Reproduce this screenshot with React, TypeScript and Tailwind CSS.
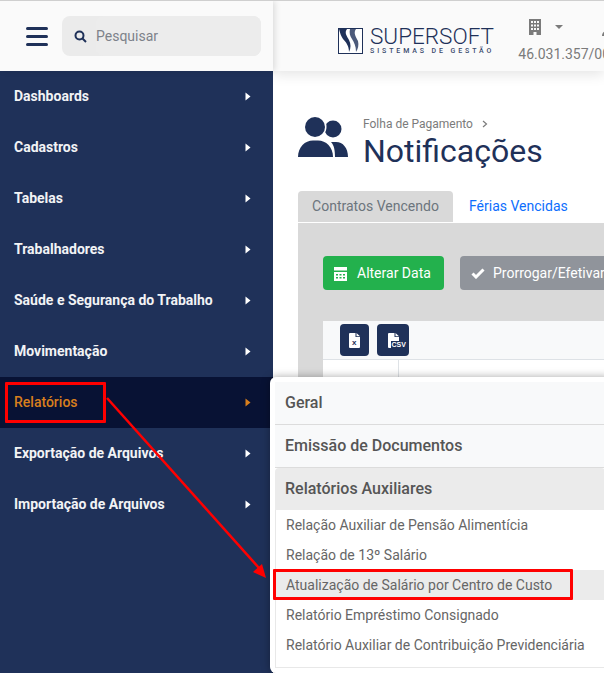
const menu = [
  "Dashboards",
  "Cadastros",
  "Tabelas",
  "Trabalhadores",
  "Saúde e Segurança do Trabalho",
  "Movimentação",
  "Relatórios",
  "Exportação de Arquivos",
  "Importação de Arquivos",
]

const groups = ["Geral", "Emissão de Documentos"]

const reports = [
  "Relação Auxiliar de Pensão Alimentícia",
  "Relação de 13º Salário",
  "Atualização de Salário por Centro de Custo",
  "Relatório Empréstimo Consignado",
  "Relatório Auxiliar de Contribuição Previdenciária",
]

function Caret({ color }: { color: string }) {
  return (
    <svg width="6" height="9" viewBox="0 0 6 9" className={color}>
      <path d="M0.5 0.5 L5.5 4.5 L0.5 8.5 Z" fill="currentColor" />
    </svg>
  )
}

function Logo() {
  return (
    <svg width="25" height="26" viewBox="0 0 25 26">
      <rect x="0.5" y="0.5" width="24" height="25" fill="#fff" stroke="#1f3159" />
      <path d="M1 1 H9 C6 5 9 8 11 12 C13 16 13 20 11 24 C11 18 8 14 5 11 C3 8 2 5 1 1 Z" fill="#1f3159" />
      <path d="M12 1 H18 C15 5 18 9 20 13 C21 17 20 21 18 24 C18 18 16 14 14 11 C12 8 11 5 12 1 Z" fill="#1f3159" opacity="0.8" />
    </svg>
  )
}

function UsersIcon() {
  return (
    <svg width="50" height="40" viewBox="0 0 50 40" className="shrink-0 text-[#1f3159]">
      <circle cx="35" cy="12" r="8.500" fill="currentColor" />
      <path d="M33 25 H38 C45 25 50 31 50 40 H37 C37 33 36 28 33 25 Z" fill="currentColor" />
      <circle cx="17" cy="10" r="10" fill="currentColor" stroke="#fff" strokeWidth="3" paintOrder="stroke" />
      <path d="M0 40 C0 30 7 23.500 15 23.500 H20 C28 23.500 35 30 35 40 Z" fill="currentColor" />
    </svg>
  )
}

function CalendarIcon() {
  return (
    <svg width="13" height="14" viewBox="0 0 13 14" fill="#fff">
      <path d="M0 0 H13 V3.500 H0 Z" />
      <path fillRule="evenodd" d="M0 5 H13 V14 H0 Z M2 7 V8.500 H4 V7 Z M5.500 7 V8.500 H7.500 V7 Z M9 7 V8.500 H11 V7 Z M2 10 V11.500 H4 V10 Z M5.500 10 V11.500 H7.500 V10 Z M9 10 V11.500 H11 V10 Z" />
    </svg>
  )
}

function FileBadge({ label, wide }: { label: string; wide?: boolean }) {
  return (
    <div className={`flex h-[32px] items-center justify-center rounded bg-[#1f3159] ${wide ? "w-[32px]" : "w-[29px]"}`}>
      <div className="relative h-[15px] w-[11px]">
        <svg width="11" height="15" viewBox="0 0 11 15" className="absolute inset-0">
          <path d="M0 1 Q0 0 1 0 H6.500 V4 H11 V14 Q11 15 10 15 H1 Q0 15 0 14 Z M7.500 0 L11 3.300 H7.500 Z" fill="#fff" />
        </svg>
        <span className={`absolute font-['Liberation_Sans',sans-serif] font-bold leading-none ${wide ? "top-[8px] left-[3px] bg-[#1f3159] px-px text-[7px] text-white" : "top-[6px] left-[3px] text-[8px] text-[#1f3159]"}`}>
          {label}
        </span>
      </div>
    </div>
  )
}

function Sidebar() {
  return (
    <aside className="relative z-10 flex w-[273px] shrink-0 flex-col bg-[#1f3159]">
      <div className="flex h-[70px] items-center bg-[#fafafa] pr-[12px] pl-[26px] shadow-[2px_0_6px_rgba(0,0,0,0.12)]">
        <div className="flex w-[22px] flex-col gap-[5px]">
          <div className="h-[3px] rounded-full bg-[#1f3159]" />
          <div className="h-[3px] rounded-full bg-[#1f3159]" />
          <div className="h-[3px] rounded-full bg-[#1f3159]" />
        </div>
        <div className="ml-[14px] flex h-[40px] flex-1 items-center rounded-lg bg-[#ebebeb] pl-[12px]">
          <svg width="13" height="13" viewBox="0 0 13 13" fill="none" stroke="#1f3159" strokeWidth="2">
            <circle cx="5.500" cy="5.500" r="4" />
            <path d="M8.500 8.500 L12 12" />
          </svg>
          <div className="ml-[9px] flex h-full flex-1 items-center rounded-lg bg-[#ececec] text-[14px] text-[#7d828a]">Pesquisar</div>
        </div>
      </div>
      {menu.map((item) => {
        const active = item === "Relatórios"
        return (
          <div
            key={item}
            className={`flex h-[51px] items-center justify-between pr-[22px] pl-[14px] text-[14px] ${active ? "bg-[#081234] font-medium text-[#d97f1d]" : "font-bold text-[#f2f3f5]"}`}
          >
            <span>{item}</span>
            <Caret color={active ? "text-[#d97f1d]" : "text-white"} />
          </div>
        )
      })}
    </aside>
  )
}

function TopBar() {
  return (
    <header className="flex h-[70px] shrink-0 items-start overflow-x-clip bg-[#fafafa] pl-[65px] shadow-[0_4px_12px_rgba(0,0,0,0.1)]">
      <div className="mt-[25px] flex items-center gap-[7px]">
        <Logo />
        <div className="flex flex-col">
          <span className="text-[22.500px] leading-[20px] font-light text-[#1f3159]">SUPERSOFT</span>
          <span className="mt-[1px] text-[7px] leading-[8px] font-medium tracking-[2.900px] whitespace-nowrap text-[#3b4b6e]">SISTEMAS DE GESTÃO</span>
        </div>
      </div>
      <div className="ml-[24px] flex w-[84px] shrink-0 flex-col whitespace-nowrap">
        <div className="mt-[18px] flex items-start pl-[11px]">
          <svg width="12" height="16" viewBox="0 0 12 16" fill="#7b7b7b">
            <path fillRule="evenodd" d="M0 0 H12 V16 H7.500 V13 H4.500 V16 H0 Z M2 2 V4 H4 V2 Z M5 2 V4 H7 V2 Z M8 2 V4 H10 V2 Z M2 5.500 V7.500 H4 V5.500 Z M5 5.500 V7.500 H7 V5.500 Z M8 5.500 V7.500 H10 V5.500 Z M2 9 V11 H4 V9 Z M5 9 V11 H7 V9 Z M8 9 V11 H10 V9 Z" />
          </svg>
          <svg width="8" height="4" viewBox="0 0 8 4" className="mt-[6px] ml-[14px]" fill="#7b7b7b">
            <path d="M0 0 H8 L4 4 Z" />
          </svg>
        </div>
        <span className="mt-[10px] text-[14px] leading-[18px] text-[#7b7b7b]">46.031.357/0001-00</span>
      </div>
      <svg width="8" height="8" viewBox="0 0 8 8" className="mt-[27px] shrink-0" fill="#7b7b7b">
        <path d="M0 8 C0 5 2 3 4 3 C6 3 8 5 8 8 Z" />
      </svg>
    </header>
  )
}

function Content() {
  return (
    <main className="flex min-w-0 flex-1 flex-col pt-[46px] pl-[25px]">
      <div className="flex items-start gap-[15px]">
        <UsersIcon />
        <div className="mt-[-1px] flex flex-col">
          <div className="flex items-center gap-[9px] text-[12px] leading-[16px] text-[#7b7b7b]">
            <span>Folha de Pagamento</span>
            <svg width="6" height="8" viewBox="0 0 6 8" fill="none" stroke="#7b7b7b" strokeWidth="1.200">
              <path d="M1 1 L4.500 4 L1 7" />
            </svg>
          </div>
          <h1 className="text-[32px] leading-[38px] text-[#1f3159]">Notificações</h1>
        </div>
      </div>
      <div className="mt-[21px] flex h-[31px] items-stretch text-[14px]">
        <div className="flex w-[155px] items-center justify-center rounded-t bg-[#d9d9d9] text-[#6c757d]">Contratos Vencendo</div>
        <div className="flex items-center pl-[16px] text-[#0d6efd]">Férias Vencidas</div>
      </div>
      <div className="mt-[1px] flex-1 bg-[#d9d9d9] pt-[33px] pl-[25px]">
        <div className="flex gap-[16px] whitespace-nowrap text-[14px]">
          <div className="flex h-[34px] w-[121px] shrink-0 items-center gap-[10px] rounded bg-[#23b14d] pt-[1px] pl-[11px] text-white">
            <CalendarIcon />
            Alterar Data
          </div>
          <div className="flex h-[34px] w-[200px] shrink-0 items-center gap-[8px] rounded bg-[#90949b] pt-[1px] pl-[11px] text-white">
            <svg width="14" height="11" viewBox="0 0 14 11" fill="none" stroke="#fff" strokeWidth="3">
              <path d="M1.500 5.500 L5 9 L12.500 1.500" />
            </svg>
            Prorrogar/Efetivar
          </div>
        </div>
        <div className="mt-[31px] bg-white">
          <div className="flex h-[39px] items-center gap-[8px] border-b border-[#dee2e6] bg-[#f8f9fa] pl-[17px]">
            <FileBadge label="x" />
            <FileBadge label="CSV" wide />
          </div>
          <div className="ml-[75px] h-[40px] border-l border-[#dee2e6]" />
        </div>
      </div>
    </main>
  )
}

function ReportsPopup() {
  return (
    <div className="absolute top-[376px] left-[270px] z-20 h-[296px] w-[340px] rounded-l-md bg-white p-[5px] shadow-[0_0_8px_rgba(0,0,0,0.35)]">
      {groups.map((g) => (
        <div key={g} className="flex h-[43px] items-center border-b border-[#dcdcdc] bg-[#f8f9fa] pl-[10px] text-[16px] font-medium text-[#555]">
          {g}
        </div>
      ))}
      <div className="flex h-[42px] items-center rounded-t bg-[#ebebeb] pl-[10px] text-[16px] font-medium text-[#555]">
        Relatórios Auxiliares
      </div>
      <div className="h-[158px] border-x border-b border-[#e8e8e8] bg-white">
        {reports.map((r) => (
          <div
            key={r}
            className={`flex h-[30px] items-center pl-[10px] text-[14px] text-[#666] ${r.startsWith("Atualização") ? "bg-[#ebebeb]" : ""}`}
          >
            {r}
          </div>
        ))}
      </div>
    </div>
  )
}

export default function App() {
  return (
    <div className="relative flex h-[673px] w-[604px] overflow-hidden border-t border-[#cfcfcf] bg-white font-['Roboto',sans-serif]">
      <Sidebar />
      <div className="flex min-w-0 flex-1 flex-col">
        <TopBar />
        <Content />
      </div>
      <ReportsPopup />
      {/* marcações vermelhas do tutorial */}
      <div className="absolute top-[381px] left-[5px] z-30 h-[41px] w-[101px] rounded-[1px] border-[3px] border-[#f00]" />
      <div className="absolute top-[568px] left-[273px] z-30 h-[31px] w-[300px] rounded-[1px] border-[3px] border-[#f00]" />
      <svg width="604" height="673" className="pointer-events-none absolute top-0 left-0 z-30">
        <path d="M107 397 L259 567" stroke="#f00" strokeWidth="2.500" />
        <path d="M266 577 L253 571 L262 563 Z" fill="#f00" />
      </svg>
    </div>
  )
}
